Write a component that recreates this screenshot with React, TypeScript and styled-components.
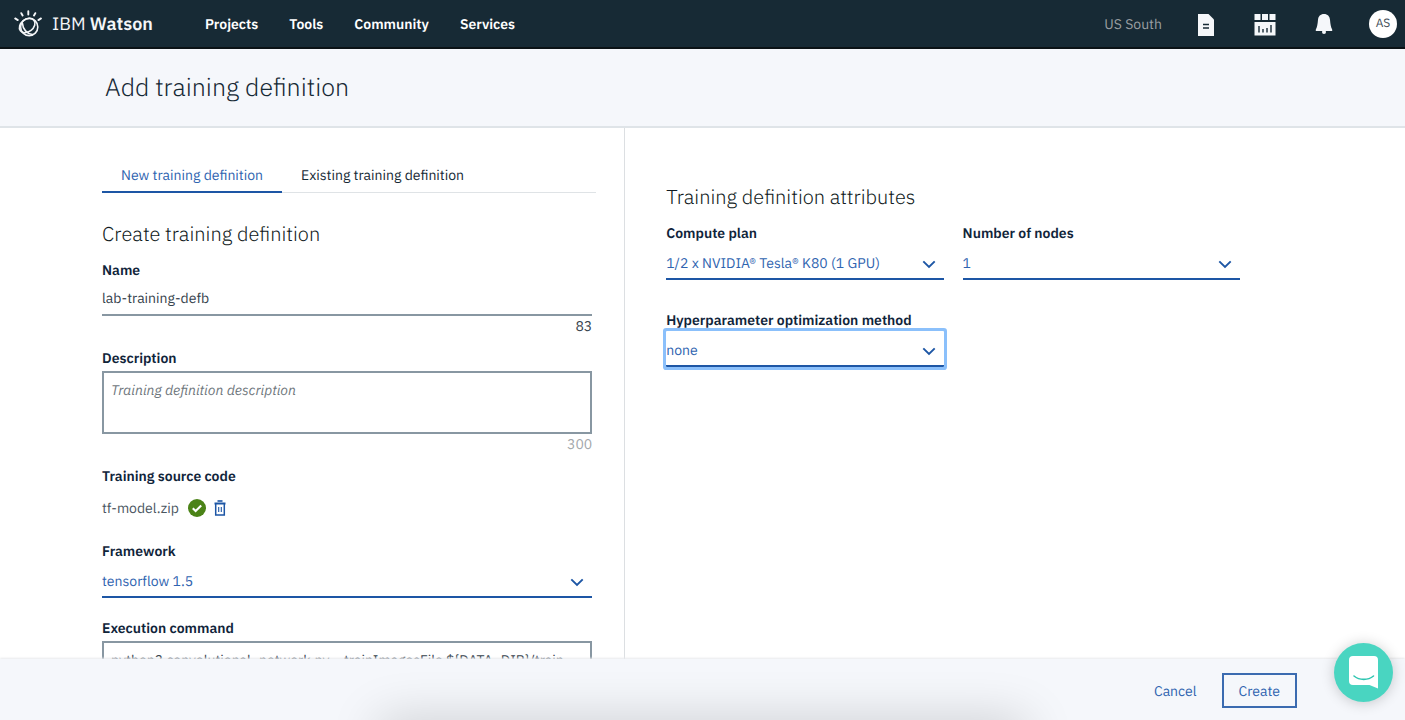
import React from "react";
import styled, { createGlobalStyle, css } from "styled-components";

const blue = "#2f64b0";
const line = "#1d56a5";
const ink = "#152935";

const GlobalStyle = createGlobalStyle`
  * { box-sizing: border-box; }
  body {
    margin: 0;
    background: #fff;
    color: ${ink};
    font-family: "IBM Plex Sans", Roboto, "Liberation Sans", sans-serif;
    font-size: 14px;
    line-height: 20px;
    text-rendering: geometricPrecision;
  }
  button, input, select, textarea { font: inherit; margin: 0; text-rendering: inherit; }
`;

const Page = styled.div`
  display: flex;
  flex-direction: column;
  height: 100vh;
`;

const Header = styled.header`
  flex: none;
  display: flex;
  align-items: center;
  height: 49px;
  padding: 1px 8px 0 14px;
  background: #172a35;
  border-bottom: 2px solid #0b1216;
  color: #fff;
`;

const Brand = styled.a`
  display: flex;
  align-items: center;
  gap: 10px;
  width: 191px;
  color: #f4f6f8;
  font-size: 18px;
  text-decoration: none;
  white-space: nowrap;
  b { font-weight: 600; }
`;

const Nav = styled.nav`
  display: flex;
  gap: 31px;
  flex: 1;
`;

const NavLink = styled.a`
  color: #fff;
  font-weight: 600;
  text-decoration: none;
`;

const Region = styled.span`
  margin-right: 30px;
  color: #9a9fa2;
`;

const Tools = styled.div`
  display: flex;
  align-items: center;
  gap: 31px;
`;

const IconButton = styled.button`
  display: flex;
  align-items: center;
  justify-content: center;
  width: 28px;
  height: 28px;
  padding: 2px 0 0;
  border: 0;
  background: none;
  color: #f5f7fa;
`;

const Avatar = styled(IconButton)`
  padding: 0;
  border-radius: 50%;
  background: #fff;
  color: #3c4a54;
  font-size: 12px;
`;

const TitleBar = styled.div`
  flex: none;
  display: flex;
  align-items: center;
  height: 79px;
  padding: 0 105px 2px;
  background: #f5f7fb;
  border-bottom: 2px solid #dfe4e8;
`;

const PageTitle = styled.h1`
  margin: 0;
  font-size: 25px;
  line-height: 32px;
  font-weight: 300;
`;

const Main = styled.main`
  flex: 1;
  min-height: 0;
  display: grid;
  grid-template-columns: 89fr 111fr;
  overflow: hidden;
`;

const DefinitionPane = styled.section`
  padding: 28px 28px 0 102px;
  border-right: 1px solid #dcdfe2;
`;

const AttributesPane = styled.section`
  padding: 55px 165px 0 41px;
`;

const Tabs = styled.div`
  display: flex;
  height: 37px;
  margin-bottom: 27px;
  box-shadow: inset 0 -1px 0 #dfe3e6;
`;

const Tab = styled.button<{ $active?: boolean }>`
  padding: 2px 19px 0;
  border: 0;
  border-bottom: 2px solid ${(p) => (p.$active ? line : "transparent")};
  background: none;
  color: ${(p) => (p.$active ? blue : ink)};
`;

const Form = styled.form`
  padding-right: 4px;
`;

const SectionTitle = styled.h2`
  margin: 0 0 12px;
  color: #111b22;
  font-size: 20px;
  line-height: 28px;
  font-weight: 300;
`;

const Field = styled.div<{ $gap?: number }>`
  display: flex;
  flex-direction: column;
  margin-bottom: ${(p) => p.$gap ?? 12}px;
`;

const labelText = css`
  color: #10243a;
  font-weight: 600;
  line-height: 20px;
`;

const Label = styled.label`
  ${labelText}
`;

const Caption = styled.h3`
  ${labelText}
  margin: 0 0 12px;
  font-size: 14px;
`;

const TextInput = styled.input`
  width: 100%;
  height: 36px;
  padding: 2px 0 0;
  border: 0;
  border-bottom: 2px solid #8897a2;
  border-radius: 0;
  background: none;
  color: #35424c;
`;

const TextArea = styled.textarea`
  display: block;
  width: 100%;
  height: 63px;
  margin-top: 3px;
  padding: 7px;
  border: 2px solid #8897a2;
  border-radius: 0;
  background: #fff;
  color: #35424c;
  overflow: hidden;
  resize: none;
  &::placeholder { color: #6f777d; font-style: italic; }
`;

const Counter = styled.span<{ $muted?: boolean }>`
  align-self: flex-end;
  color: ${(p) => (p.$muted ? "#a3a7ab" : "#35424c")};
`;

const FileRow = styled.div`
  display: flex;
  align-items: center;
  gap: 8px;
  height: 20px;
  margin-bottom: 23px;
  color: #4a565f;
`;

const FileName = styled.span`
  margin-right: 1px;
`;

const DeleteButton = styled.button`
  display: flex;
  padding: 0;
  border: 0;
  background: none;
  color: ${line};
`;

const SelectBox = styled.div<{ $focused?: boolean }>`
  display: grid;
  align-items: center;
  margin-top: 1px;
  border-bottom: 2px solid ${line};
  ${(p) => p.$focused && css`
    border-radius: 1px;
    box-shadow: 0 0 0 3px #8bc0fb;
  `}
  > * { grid-area: 1 / 1; }
  svg { justify-self: end; margin: 7px 8px 0 0; pointer-events: none; color: ${line}; }
`;

const SelectInput = styled.select`
  width: 100%;
  height: 34px;
  padding: 4px 32px 0 0;
  border: 0;
  outline: 0;
  appearance: none;
  background: none;
  color: ${blue};
`;

const AttributeGrid = styled.div`
  display: grid;
  grid-template-columns: 1fr 1fr;
  gap: 30px 19px;
`;

const Footer = styled.footer`
  position: relative;
  flex: none;
  display: flex;
  align-items: center;
  justify-content: flex-end;
  gap: 8px;
  height: 61px;
  padding: 2px 108px 0 0;
  background: #f5f7fb;
  box-shadow: 0 -1px 2px #e8eaec;
  overflow: hidden;
  &::after {
    content: "";
    position: absolute;
    left: 27%;
    right: 27%;
    bottom: -40px;
    height: 40px;
    box-shadow: 0 0 50px rgba(0, 0, 0, 0.18);
  }
`;

const ActionButton = styled.button<{ $outlined?: boolean }>`
  height: 35px;
  padding: 0 15px;
  border: 2px solid ${(p) => (p.$outlined ? "#3b6bb0" : "transparent")};
  background: none;
  color: ${blue};
`;

const ChatButton = styled.button`
  position: fixed;
  right: 12px;
  bottom: 18px;
  display: flex;
  align-items: center;
  justify-content: center;
  width: 59px;
  height: 59px;
  padding: 0;
  border: 0;
  border-radius: 50%;
  background: #49d5c1;
  box-shadow: 0 1px 14px rgba(0, 0, 0, 0.2);
`;

const WatsonLogo = () => (
  <svg width="28" height="28" viewBox="0 0 28 28" fill="none" stroke="currentColor" strokeWidth="1.6" strokeLinecap="round" aria-hidden="true">
    <circle cx="15.200" cy="17" r="8.600" />
    <ellipse cx="13.200" cy="15.500" rx="8.600" ry="6.200" transform="rotate(-38 13.200 15.500)" />
    <path d="M8.500 13.500c.2 5.500 4.500 10.500 10 11" />
    <path d="M14.300 1.300v3.200M7.300 3.200l1.300 2.300M21.300 3.200l-1.300 2.300M1.200 8.400l2.600 1.700M27 8.400l-2.600 1.700" strokeWidth="1.900" />
  </svg>
);

const DocumentIcon = () => (
  <svg width="16" height="22" viewBox="0 0 16 22" aria-hidden="true">
    <path d="M0 0h10.5L16 5.5V22H0z" fill="currentColor" />
    <path d="M5 10.5h6M5 14h6" stroke="#172a35" strokeWidth="1.4" />
  </svg>
);

const CatalogIcon = () => (
  <svg width="22" height="22" viewBox="0 0 22 22" aria-hidden="true">
    <path d="M.5 0h6v6h-6zM8 0h6v6H8zM15.5 0h6v6h-6zM.5 8h21v13.500h-21z" fill="currentColor" />
    <path d="M5 12v6.500M9 15v3.500M13 14v4.500M17 11v7.500" stroke="#172a35" strokeWidth="1.4" />
  </svg>
);

const BellIcon = () => (
  <svg width="18" height="22" viewBox="0 0 18 22" fill="currentColor" aria-hidden="true">
    <path d="M9 0c3.700 0 5.600 2.200 6 5.800.4 4.800.9 7.400 2.200 9.700V17H.8v-1.500C2.100 13.200 2.600 10.600 3 5.800 3.400 2.200 5.300 0 9 0z" />
    <circle cx="9" cy="18" r="2" />
  </svg>
);

const Chevron = () => (
  <svg width="14" height="9" viewBox="0 0 14 9" fill="none" stroke="currentColor" strokeWidth="1.9" aria-hidden="true">
    <path d="M1.300 1.300 7 7l5.700-5.700" />
  </svg>
);

const DoneIcon = () => (
  <svg width="18" height="18" viewBox="0 0 18 18" role="img" aria-label="Uploaded">
    <circle cx="9" cy="9" r="9" fill="#4b8317" />
    <path d="m4.800 9.300 2.800 2.800 5.600-5.600" fill="none" stroke="#fff" strokeWidth="2.100" />
  </svg>
);

const TrashIcon = () => (
  <svg width="12" height="16" viewBox="0 0 12 16" fill="none" stroke="currentColor" aria-hidden="true">
    <path d="M3.500 1h5" strokeWidth="1.600" />
    <path d="M.5 3.500h11" strokeWidth="2" />
    <path d="M1.700 4v11h8.600V4" strokeWidth="1.500" />
    <path d="M4.700 7v5M7.300 7v5" strokeWidth="1.100" />
  </svg>
);

const ChatIcon = () => (
  <svg width="30" height="33" viewBox="0 0 30 33" aria-hidden="true">
    <path d="M4 0h21a4 4 0 0 1 4 4v28.500L20.500 29H4a4 4 0 0 1-4-4V4a4 4 0 0 1 4-4z" fill="#fff" />
    <path d="M5 20c5.500 4.500 14 4.500 19.500 0" fill="none" stroke="#2dc5b0" strokeWidth="1.600" strokeLinecap="round" />
  </svg>
);

type SelectProps = { id: string; label: string; value: string; gap?: number; focused?: boolean };

const SelectField = ({ id, label, value, gap = 0, focused }: SelectProps) => (
  <Field $gap={gap}>
    <Label htmlFor={id}>{label}</Label>
    <SelectBox $focused={focused}>
      <SelectInput id={id}>
        <option>{value}</option>
      </SelectInput>
      <Chevron />
    </SelectBox>
  </Field>
);

export default function App() {
  return (
    <Page>
      <GlobalStyle />
      <Header>
        <Brand href="#">
          <WatsonLogo />
          <span>IBM <b>Watson</b></span>
        </Brand>
        <Nav>
          {["Projects", "Tools", "Community", "Services"].map((item) => (
            <NavLink href="#" key={item}>{item}</NavLink>
          ))}
        </Nav>
        <Region>US South</Region>
        <Tools>
          <IconButton aria-label="Documentation"><DocumentIcon /></IconButton>
          <IconButton aria-label="Catalog"><CatalogIcon /></IconButton>
          <IconButton aria-label="Notifications"><BellIcon /></IconButton>
          <Avatar>AS</Avatar>
        </Tools>
      </Header>

      <TitleBar>
        <PageTitle>Add training definition</PageTitle>
      </TitleBar>

      <Main>
        <DefinitionPane>
          <Tabs role="tablist">
            <Tab role="tab" aria-selected="true" $active>New training definition</Tab>
            <Tab role="tab" aria-selected="false">Existing training definition</Tab>
          </Tabs>
          <Form>
            <SectionTitle>Create training definition</SectionTitle>
            <Field>
              <Label htmlFor="name">Name</Label>
              <TextInput id="name" defaultValue="lab-training-defb" />
              <Counter>83</Counter>
            </Field>
            <Field>
              <Label htmlFor="description">Description</Label>
              <TextArea id="description" placeholder="Training definition description" />
              <Counter $muted>300</Counter>
            </Field>
            <Caption>Training source code</Caption>
            <FileRow>
              <FileName>tf-model.zip</FileName>
              <DoneIcon />
              <DeleteButton type="button" aria-label="Delete file"><TrashIcon /></DeleteButton>
            </FileRow>
            <SelectField id="framework" label="Framework" value="tensorflow 1.5" gap={20} />
            <Field>
              <Label htmlFor="command">Execution command</Label>
              <TextArea
                id="command"
                defaultValue={"python3 convolutional_network.py --trainImagesFile ${DATA_DIR}/train-"}
              />
            </Field>
          </Form>
        </DefinitionPane>

        <AttributesPane>
          <SectionTitle>Training definition attributes</SectionTitle>
          <AttributeGrid>
            <SelectField id="plan" label="Compute plan" value="1/2 x NVIDIA® Tesla® K80 (1 GPU)" />
            <SelectField id="nodes" label="Number of nodes" value="1" />
            <SelectField id="method" label="Hyperparameter optimization method" value="none" focused />
          </AttributeGrid>
        </AttributesPane>
      </Main>

      <Footer>
        <ActionButton>Cancel</ActionButton>
        <ActionButton $outlined>Create</ActionButton>
      </Footer>
      <ChatButton aria-label="Open chat"><ChatIcon /></ChatButton>
    </Page>
  );
}
